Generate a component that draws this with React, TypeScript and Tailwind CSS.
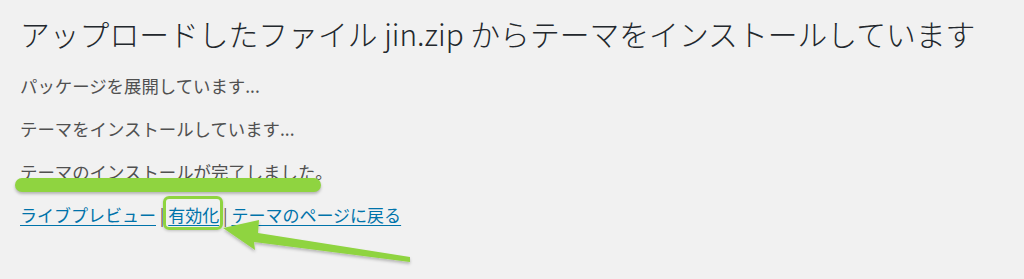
import React from "react";

const font = { fontFamily: '"Noto Sans CJK JP", "Noto Sans", sans-serif' };

export default function App() {
  return (
    <div
      className="relative w-[1024px] h-[279px] overflow-hidden bg-[#f1f1f1] px-[20px] pt-[13px]"
      style={font}
    >
      <h1 className="text-[29.8px] leading-[40px] font-light text-[#23282d] whitespace-nowrap">
        アップロードしたファイル jin.zip からテーマをインストールしています
      </h1>

      <div className="mt-[20px] flex flex-col gap-[17px] text-[17.4px] leading-[26px] text-[#505050]">
        <p>パッケージを展開しています...</p>
        <p>テーマをインストールしています...</p>
        <p>テーマのインストールが完了しました。</p>
        <p className="whitespace-nowrap text-[17px]">
          <a href="#" className="text-[#0073aa] underline underline-offset-[3px]">
            ライブプレビュー
          </a>
          <span className="text-[#6b5a52]"> | </span>
          <a href="#" className="text-[#0073aa] underline underline-offset-[3px]">
            有効化
          </a>
          <span className="text-[#6b5a52]"> | </span>
          <a href="#" className="text-[#0073aa] underline underline-offset-[3px]">
            テーマのページに戻る
          </a>
        </p>
      </div>

      {/* annotations */}
      <div className="absolute left-[15px] top-[178px] w-[306px] h-[14px] rounded-full bg-[#8fd440] shadow-[0_2px_3px_rgba(0,0,0,0.25)]" />
      <div className="absolute left-[163px] top-[196px] w-[60px] h-[34px] rounded-[6px] border-[3px] border-[#8fd440] shadow-[0_1px_3px_rgba(0,0,0,0.2)]" />
      <svg className="absolute left-0 top-0" width="1024" height="279">
        <defs>
          <filter id="sh" x="-10%" y="-30%" width="120%" height="160%">
            <feDropShadow dx="0" dy="2" stdDeviation="1.5" floodColor="#000" floodOpacity="0.25" />
          </filter>
        </defs>
        <polygon
          points="223,228 259,220 258,233 410,257 410,262 254,242 255,250"
          fill="#8fd440"
          filter="url(#sh)"
        />
      </svg>
    </div>
  );
}
